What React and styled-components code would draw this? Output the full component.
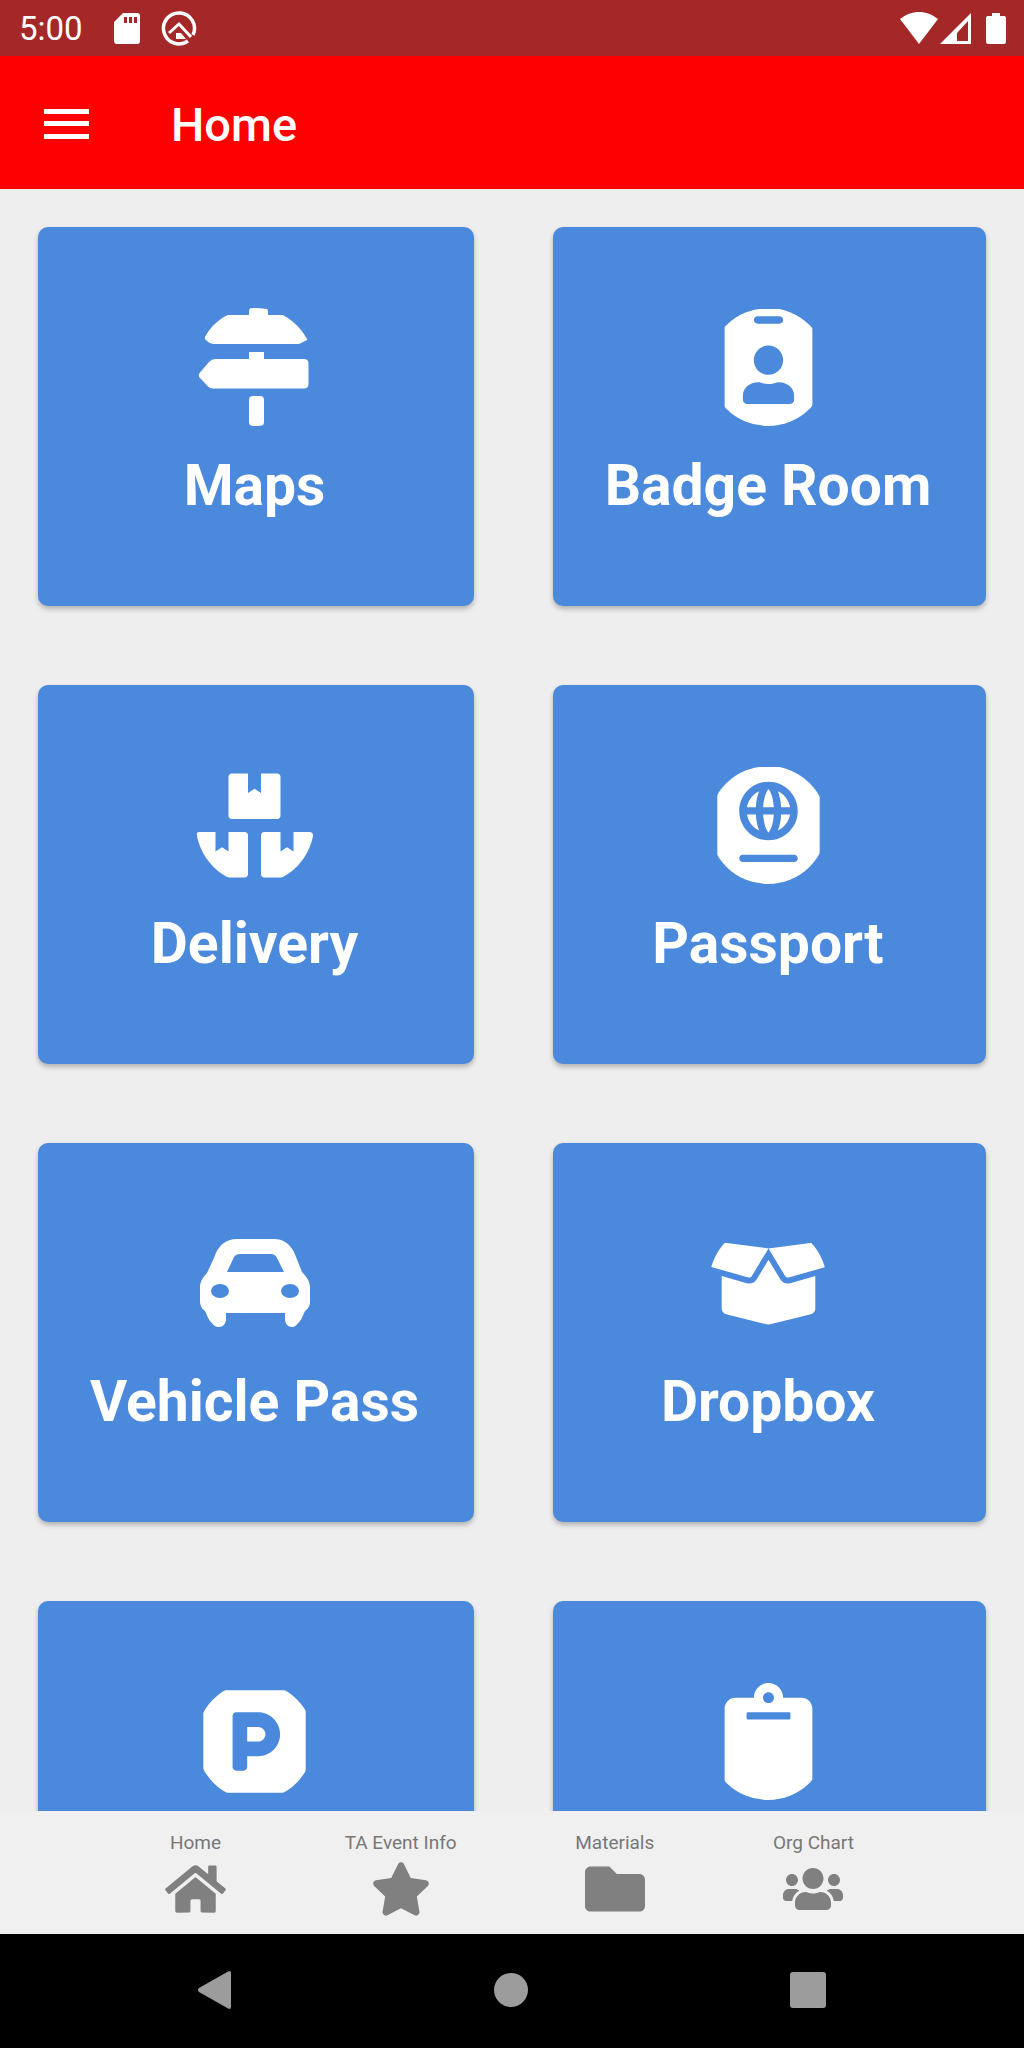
import React from 'react'
import styled, { createGlobalStyle } from 'styled-components'
import {
  FaIdBadge,
  FaBoxes,
  FaPassport,
  FaBoxOpen,
  FaParking,
  FaClipboard,
  FaHome,
  FaStar,
  FaFolder,
  FaUsers,
} from 'react-icons/fa'

const GlobalStyle = createGlobalStyle`
  html, body {
    margin: 0;
    padding: 0;
    background: #000;
    font-family: Roboto, "Liberation Sans", sans-serif;
  }
`

const Screen = styled.div`
  width: 1024px;
  height: 2048px;
  display: flex;
  flex-direction: column;
  overflow: hidden;
  background: #eeeeee;
`

const StatusBar = styled.div`
  height: 56px;
  flex: none;
  display: flex;
  align-items: center;
  padding: 0 18px 0 19px;
  background: #a52828;
  color: #fff;
`

const Clock = styled.span`
  font-size: 33px;
  width: 74px;
`

const StatusLeft = styled.div`
  display: flex;
  align-items: center;
  gap: 21px;
  flex: 1;
`

const StatusRight = styled.div`
  display: flex;
  align-items: center;
  gap: 2px;
  svg:last-child {
    margin-left: 12px;
  }
`

const AppBar = styled.header`
  height: 133px;
  flex: none;
  display: flex;
  align-items: center;
  padding-left: 44px;
  background: #ff0000;
  color: #fff;
`

const Burger = styled.div`
  width: 45px;
  height: 30px;
  margin: 2px 82px 0 0;
  display: flex;
  flex-direction: column;
  justify-content: space-between;
  span {
    display: block;
    height: 5px;
    background: #fff;
  }
`

const Title = styled.h1`
  margin: 4px 0 0;
  font-size: 47px;
  font-weight: 500;
`

const Content = styled.main`
  flex: 1;
  min-height: 0;
  overflow: hidden;
  padding: 38px 38px 0;
  display: grid;
  grid-template-columns: 436px 433px;
  grid-auto-rows: 379px;
  column-gap: 79px;
  row-gap: 79px;
`

const Card = styled.div`
  display: flex;
  flex-direction: column;
  align-items: center;
  padding: 81px 3px 0 0;
  box-sizing: border-box;
  background: #4a89dc;
  border-radius: 10px;
  box-shadow: 0 3px 5px rgba(0, 0, 0, 0.25);
  color: #fff;
`

// Every tile glyph sits in a round mask of the same size
const IconMask = styled.div`
  width: 118px;
  height: 118px;
  display: flex;
  align-items: center;
  justify-content: center;
  border-radius: 50%;
  overflow: hidden;
  svg {
    height: 117px;
    width: auto;
    flex: none;
    display: block;
  }
`

// Hand-drawn glyphs keep their own size inside the mask
const DrawnIcon = styled.svg`
  &&& {
    width: ${(props) => props.$w}px;
    height: ${(props) => props.$h}px;
  }
  fill: #fff;
`

const CardLabel = styled.div`
  margin-top: 28px;
  font-size: 57px;
  line-height: 64px;
  font-weight: 700;
  white-space: nowrap;
`

const TabBar = styled.nav`
  height: 123px;
  flex: none;
  box-sizing: border-box;
  padding: 0 170px 0 165px;
  display: flex;
  justify-content: space-between;
  background: #f0f0f0;
`

const Tab = styled.div`
  display: flex;
  flex-direction: column;
  align-items: center;
  color: #808080;
`

const TabLabel = styled.span`
  margin-top: 20px;
  font-size: 19px;
  line-height: 24px;
  color: #777;
  white-space: nowrap;
`

const TabIcon = styled.div`
  height: 56px;
  margin-top: 6px;
  display: flex;
  align-items: center;
  svg {
    display: block;
    width: ${(props) => props.$w}px;
    height: ${(props) => props.$h}px;
  }
`

const NavBar = styled.div`
  height: 114px;
  flex: none;
  box-sizing: border-box;
  display: flex;
  align-items: center;
  padding: 0 198px 2px;
  justify-content: space-between;
  background: #000;
`

const NavDot = styled.div`
  width: 34px;
  height: 34px;
  border-radius: 50%;
  background: #9c9c9c;
`

const NavSquare = styled.div`
  width: 36px;
  height: 36px;
  border-radius: 3px;
  background: #9c9c9c;
`

const SignsIcon = () => (
  <DrawnIcon $w={170} $h={156} viewBox="0 0 170 156">
    <path d="M79 26v-3q0-5 5-5h9q5 0 5 5v3h17C124 28 132 38 138 47q1 3-1 4l-6 3q-1 1-3 1H43q-3 0-6-3q-3-2-2-4C40 38 50 28 58 26z" />
    <path d="M79 63h15v7H134q4.500 0 4.500 4.500V95q0 4.500-4.500 4.500H43q-3 0-5-2L30 89q-2.500-3 0-5.500L39 73q3-3 6-3H79z" />
    <rect x="79" y="107" width="15" height="30" rx="4" />
  </DrawnIcon>
)

const CarIcon = () => (
  <DrawnIcon $w={146} $h={126} viewBox="0 0 146 126">
    <path
      fillRule="evenodd"
      d="M55 19H92Q105 19 112 32L120 52Q128 60 128 67V82Q128 88 123 91L118 102Q114 107 110 107Q104 107 103 100V93H44V100Q43 107 37 107Q32 107 28 102L23 91Q18 88 18 82V67Q18 60 25 53L32 38Q38 19 55 19ZM45 52H102L95 38Q93 34 89 34H58Q54 34 52 37ZM29 71a9 7 0 1 0 18 0a9 7 0 1 0-18 0ZM99 71a9 7 0 1 0 18 0a9 7 0 1 0-18 0Z"
    />
  </DrawnIcon>
)

const SdCard = () => (
  <svg width="26" height="31" viewBox="0 0 26 31" fill="#fff">
    <path d="M9 0h14q3 0 3 3v25q0 3-3 3H3q-3 0-3-3V9zM10 4v6h3V4zm5 0v6h3V4zm5 0v6h3V4z" fillRule="evenodd" />
  </svg>
)

const QBadge = () => (
  <svg width="36" height="36" viewBox="0 0 36 36" fill="none" stroke="#fff">
    <path d="M27 31A15.500 15.500 0 1 1 32 25" strokeWidth="3.500" />
    <path d="M8 23L18 14L30 27" strokeWidth="3" />
    <path d="M15 23h5l5 6H15z" fill="#fff" strokeWidth="0" />
  </svg>
)

const WifiIcon = () => (
  <svg width="38" height="32" viewBox="0 0 38 32" fill="#fff">
    <path d="M19 0C12 0 6 2.500 0 7l19 25L38 7C32 2.500 26 0 19 0z" />
  </svg>
)

const SignalIcon = () => (
  <svg width="32" height="31" viewBox="0 0 32 31" fill="#fff">
    <path fillRule="evenodd" d="M31 0v31H0zM28 8L17 20v8h11z" />
  </svg>
)

const BatteryIcon = () => (
  <svg width="20" height="31" viewBox="0 0 20 31" fill="#fff">
    <path d="M6 0h8v3h4q2 0 2 2v24q0 2-2 2H2q-2 0-2-2V5q0-2 2-2h4z" />
  </svg>
)

const tiles = [
  { label: 'Maps', Icon: SignsIcon },
  { label: 'Badge Room', Icon: FaIdBadge },
  { label: 'Delivery', Icon: FaBoxes },
  { label: 'Passport', Icon: FaPassport },
  { label: 'Vehicle Pass', Icon: CarIcon },
  { label: 'Dropbox', Icon: FaBoxOpen },
  { Icon: FaParking },
  { Icon: FaClipboard },
]

const tabs = [
  { label: 'Home', Icon: FaHome, w: 61, h: 54 },
  { label: 'TA Event Info', Icon: FaStar, w: 60, h: 54 },
  { label: 'Materials', Icon: FaFolder, w: 60, h: 60 },
  { label: 'Org Chart', Icon: FaUsers, w: 60, h: 50 },
]

export default function App() {
  return (
    <Screen>
      <GlobalStyle />
      <StatusBar>
        <StatusLeft>
          <Clock>5:00</Clock>
          <SdCard />
          <QBadge />
        </StatusLeft>
        <StatusRight>
          <WifiIcon />
          <SignalIcon />
          <BatteryIcon />
        </StatusRight>
      </StatusBar>

      <AppBar>
        <Burger>
          <span />
          <span />
          <span />
        </Burger>
        <Title>Home</Title>
      </AppBar>

      <Content>
        {tiles.map(({ label, Icon }, index) => (
          <Card key={index}>
            <IconMask>
              <Icon />
            </IconMask>
            {label && <CardLabel>{label}</CardLabel>}
          </Card>
        ))}
      </Content>

      <TabBar>
        {tabs.map(({ label, Icon, w, h }) => (
          <Tab key={label}>
            <TabLabel>{label}</TabLabel>
            <TabIcon $w={w} $h={h}>
              <Icon />
            </TabIcon>
          </Tab>
        ))}
      </TabBar>

      <NavBar>
        <svg width="33" height="38" viewBox="0 0 33 38" fill="#9c9c9c">
          <path d="M31 0q2 0 2 2v34q0 2-2 2L1 21q-2-2 0-4z" />
        </svg>
        <NavDot />
        <NavSquare />
      </NavBar>
    </Screen>
  )
}
